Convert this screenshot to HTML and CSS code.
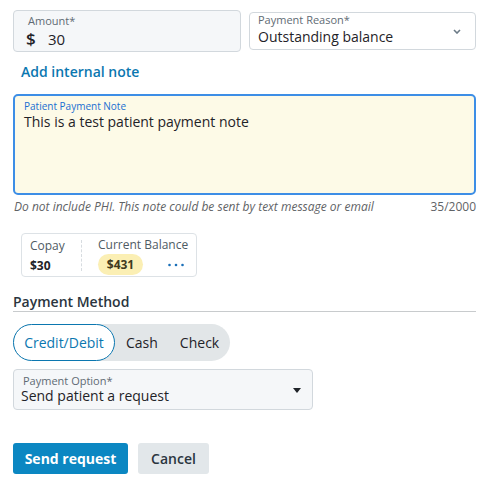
FILE: index.html
```html
<!DOCTYPE html>
<html>
<head>
<meta charset="utf-8">
<link rel="stylesheet" href="styles.css">
</head>
<body>
<div class="form">
  <div class="top-row">
    <div class="field amount">
      <div class="label">Amount*</div>
      <div class="value"><span class="dollar">$</span><span>30</span></div>
    </div>
    <div class="field reason">
      <div class="label">Payment Reason*</div>
      <div class="value">Outstanding balance</div>
      <svg class="chevron" width="8" height="5" viewBox="0 0 8 5"><path d="M1 1 L4 4 L7 1" fill="none" stroke="#6b7a86" stroke-width="1.6"/></svg>
    </div>
  </div>
  <a class="link">Add internal note</a>
  <div class="note">
    <div class="note-label">Patient Payment Note</div>
    <div class="note-text">This is a test patient payment note</div>
  </div>
  <div class="helper">
    <span class="hint">Do not include PHI. This note could be sent by text message or email</span>
    <span class="count">35/2000</span>
  </div>
  <div class="card">
    <div class="col copay">
      <div class="col-title">Copay</div>
      <div class="col-val">$30</div>
    </div>
    <div class="col balance">
      <div class="col-title">Current Balance</div>
      <div class="bal-row">
        <span class="pill">$431</span>
        <svg class="dots" width="16" height="4" viewBox="0 0 16 4"><circle cx="1.5" cy="2" r="1.3" fill="#1a6fb8"/><circle cx="8" cy="2" r="1.3" fill="#1a6fb8"/><circle cx="14.5" cy="2" r="1.3" fill="#1a6fb8"/></svg>
      </div>
    </div>
  </div>
  <div class="section-title">Payment Method</div>
  <div class="segment">
    <span class="seg active">Credit/Debit</span>
    <span class="seg">Cash</span>
    <span class="seg check">Check</span>
  </div>
  <div class="field option">
    <div class="label">Payment Option*</div>
    <div class="value">Send patient a request</div>
    <svg class="caret" width="8" height="5" viewBox="0 0 8 5"><path d="M0 0 H8 L4 5 Z" fill="#1f2328"/></svg>
  </div>
  <div class="buttons">
    <button class="btn primary">Send request</button>
    <button class="btn secondary">Cancel</button>
  </div>
</div>
</body>
</html>
```
FILE: styles.css
```css
* { box-sizing: border-box; }
body {
  margin: 0;
  font-family: "Open Sans", "Noto Sans", sans-serif;
  color: #1f2328;
  background: #fff;
}
.form {
  padding: 10px 13px 0 13px;
  display: flex;
  flex-direction: column;
  align-items: flex-start;
}
.top-row {
  display: flex;
  align-items: center;
  gap: 8px;
  width: 463px;
}
.field {
  position: relative;
  border: 1px solid #d2d8dd;
  border-radius: 4px;
}
.label {
  font-size: 11px;
  color: #5f6b74;
  line-height: 14px;
}
.value {
  font-size: 14px;
  line-height: 20px;
  color: #1f2328;
}
.amount {
  width: 228px;
  height: 42px;
  background: #f5f7f9;
  padding: 3px 0 0 14px;
}
.amount .value {
  display: flex;
  align-items: center;
  margin-top: 1px;
  font-size: 15px;
}
.amount .dollar {
  font-size: 17px;
  margin-left: -2px;
  width: 22px;
  font-weight: 600;
}
.reason {
  width: 227px;
  height: 38px;
  background: #fff;
  padding: 0 0 0 8px;
}
.chevron {
  position: absolute;
  right: 14px;
  top: 16px;
}
.link {
  margin: 10px 0 0 8px;
  font-size: 14px;
  font-weight: 600;
  color: #0b77b0;
  line-height: 20px;
}
.note {
  margin-top: 12px;
  width: 463px;
  height: 101px;
  border: 2px solid #3d8ee6;
  border-radius: 5px;
  background: #fdfae7;
  padding: 3px 0 0 9px;
}
.note-label {
  font-size: 10px;
  color: #1a6fd1;
  line-height: 14px;
}
.note-text {
  font-size: 14px;
  line-height: 18px;
  color: #1f2328;
}
.helper {
  width: 463px;
  display: flex;
  justify-content: space-between;
  font-size: 12px;
  color: #5f6366;
  line-height: 17px;
  margin-top: 3px;
  padding-left: 1px;
}
.hint { font-style: italic; }
.card {
  margin: 18px 0 0 8px;
  width: 176px;
  height: 44px;
  border: 1px solid #dde2e6;
  border-radius: 4px;
  display: flex;
}
.col-title {
  font-size: 12px;
  color: #4f5b64;
  line-height: 16px;
}
.copay {
  width: 60px;
  padding: 4px 0 0 8px;
  position: relative;
}
.copay::after {
  content: "";
  position: absolute;
  right: 0;
  top: 6px;
  height: 31px;
  border-right: 1px dashed #d7dce0;
}
.col-val {
  margin-top: 4px;
  font-size: 12px;
  font-weight: 700;
  color: #1f2328;
  line-height: 16px;
}
.balance {
  padding: 3px 0 0 16px;
}
.bal-row {
  display: flex;
  align-items: center;
  margin-top: 1px;
}
.pill {
  display: inline-block;
  width: 45px;
  height: 21px;
  line-height: 21px;
  text-align: center;
  background: #fbefb4;
  border-radius: 11px;
  font-size: 12px;
  font-weight: 700;
  color: #3f3a20;
}
.dots {
  margin-left: 25px;
}
.section-title {
  margin-top: 16px;
  width: 463px;
  font-size: 14px;
  font-weight: 600;
  color: #2a3540;
  line-height: 18px;
  border-bottom: 1px solid #c8cbcd;
}
.segment {
  margin-top: 12px;
  display: flex;
  align-items: center;
  background: #e2e6e8;
  border-radius: 19px;
  height: 37px;
  padding-right: 11px;
}
.seg {
  font-size: 14px;
  color: #1f2328;
  line-height: 20px;
}
.seg.active {
  width: 102px;
  height: 37px;
  line-height: 35px;
  text-align: center;
  background: #fff;
  border: 1px solid #0b77b0;
  border-radius: 19px;
  color: #0b77b0;
  margin-right: 11px;
}
.seg.check { margin-left: 22px; }
.option {
  margin-top: 8px;
  width: 300px;
  height: 41px;
  background: #f5f7f9;
  padding: 4px 0 0 7px;
}
.option .label { padding-left: 2px; line-height: 13px; }
.option .value { line-height: 18px; }
.caret {
  position: absolute;
  right: 11px;
  top: 18px;
}
.buttons {
  margin-top: 33px;
  display: flex;
  gap: 10px;
}
.btn {
  height: 31px;
  border: none;
  border-radius: 3px;
  font-family: "Open Sans", "Noto Sans", sans-serif;
  font-size: 14px;
  font-weight: 700;
  padding: 0;
}
.primary {
  width: 115px;
  background: #0b87c2;
  color: #fff;
}
.secondary {
  width: 71px;
  background: #e2e7ea;
  color: #2a3540;
  font-weight: 600;
}
```
